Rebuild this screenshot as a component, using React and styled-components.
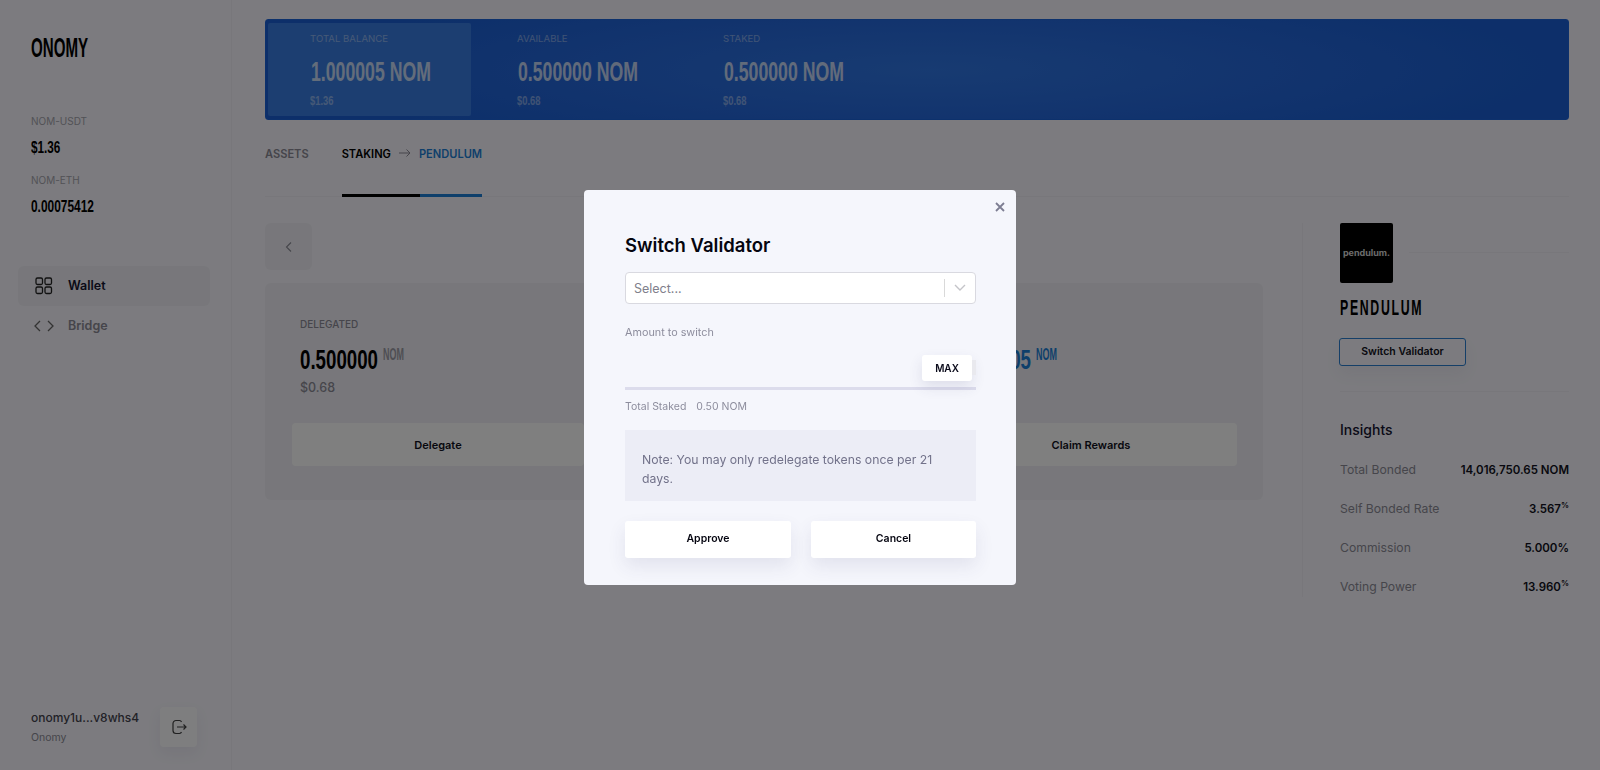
import React from "react";
import styled, { createGlobalStyle } from "styled-components";

const SANS = `"Inter", "Noto Sans", "Liberation Sans", sans-serif`;
const NARROW = `"Liberation Sans", "Arimo", sans-serif`;

const Global = createGlobalStyle`
  html, body { margin: 0; padding: 0; height: 100%; background: #f8f7fe; overflow: hidden; }
  * { box-sizing: border-box; }
  body { font-family: ${SANS}; color: #000; }
`;

/* Tall condensed display type: no such family is installed, so the bold sans is narrowed. */
const Squeezed = styled.span`
  display: block;
  flex: none;
  width: ${(p) => p.$w}px;
  white-space: nowrap;
  font-family: ${NARROW};
  font-weight: 700;
  transform: scaleX(${(p) => p.$x});
  transform-origin: left center;
`;

const Page = styled.div`
  display: grid;
  grid-template-columns: 232px 1fr;
  width: 1600px;
  height: 770px;
`;

const Sidebar = styled.aside`
  display: flex;
  flex-direction: column;
  border-right: 1px solid #f0eff6;
  padding: 33px 0 23px;
`;
const Logo = styled(Squeezed)`
  font-size: 28px;
  line-height: 30px;
  margin-left: 31px;
`;
const PriceBlock = styled.div`
  margin: 51px 0 0 31px;
  display: flex;
  flex-direction: column;
`;
const PriceLabel = styled.div`
  font: 400 10px/14px ${SANS};
  color: #a5a4ad;
  margin-top: ${(p) => p.$top || 0}px;
`;
const PriceValue = styled(Squeezed)`
  font-size: 17px;
  line-height: 20px;
  margin-top: 10px;
`;
const Nav = styled.nav`
  margin: 49px 21px 0 18px;
  display: flex;
  flex-direction: column;
`;
const NavItem = styled.div`
  height: 40px;
  display: flex;
  align-items: center;
  gap: 14px;
  padding-left: 16px;
  border-radius: 6px;
  background: ${(p) => (p.$active ? "#f0eff6" : "transparent")};
  color: ${(p) => (p.$active ? "#151530" : "#8c8b96")};
  font: 600 12.5px/16px ${SANS};
`;
const NavIcon = styled.svg`
  width: 20px;
  height: 20px;
  fill: none;
  stroke: ${(p) => (p.$active ? "#222" : "#666")};
  stroke-width: 1.3;
`;
const Account = styled.div`
  margin-top: auto;
  padding-left: 31px;
  display: flex;
  align-items: center;
`;
const AccountText = styled.div`
  width: 129px;
`;
const Address = styled.div`
  font: 500 12px/16px ${SANS};
  color: #44434e;
`;
const Network = styled.div`
  font: 400 10.5px/14px ${SANS};
  color: #8c8b96;
  margin-top: 5px;
`;
const LogoutButton = styled.div`
  width: 37px;
  height: 40px;
  border-radius: 4px;
  background: #fff;
  opacity: 0.85;
  display: grid;
  place-items: center;
  box-shadow: 0 6px 14px rgba(60, 60, 110, 0.08);
`;

const Main = styled.main`
  padding: 19px 31px 0 33px;
  min-width: 0;
`;
const Banner = styled.section`
  height: 101px;
  border-radius: 3px;
  padding: 3px 4px 3px 2px;
  display: flex;
  background: radial-gradient(ellipse 620px 90px at 51% 50%, #2f76e4 0%, #2568dc 55%, #1a5fd4 100%);
  border: 1px solid #1a62d8;
  color: #fff;
`;
const BalanceCell = styled.div`
  padding: 8px 0 0 ${(p) => p.$pad}px;
  width: ${(p) => p.$w}px;
  border-radius: 2px;
  background: ${(p) => (p.$hl ? "#387ce2" : "transparent")};
`;
const BalanceLabel = styled.div`
  font: 400 9.6px/16px ${SANS};
  opacity: 0.42;
`;
const BalanceValue = styled(Squeezed)`
  font-size: 27px;
  line-height: 28px;
  opacity: 0.72;
  margin: 10.5px 0 0 1px;
`;
const BalanceFiat = styled(Squeezed)`
  font-size: 13px;
  line-height: 14px;
  opacity: 0.42;
  margin-top: 8px;
`;

const Tabs = styled.div`
  height: 77px;
  display: flex;
  gap: 33px;
  border-bottom: 1px solid #f0eff6;
`;
const Tab = styled.div`
  display: flex;
  align-items: flex-start;
  padding-top: 26px;
  font: 600 11.1px/16px ${SANS};
  color: #8c8b96;
`;
const ActiveTab = styled(Tab)`
  color: #000;
  gap: 8px;
  position: relative;
`;
const TabLink = styled.span`
  color: #1d7fd6;
`;
const Underline = styled.div`
  position: absolute;
  left: 0;
  right: 0;
  bottom: -1px;
  height: 3px;
  background: linear-gradient(to right, #000 78px, #1d7fd6 78px);
`;

const Body = styled.div`
  display: grid;
  grid-template-columns: 998px 1fr;
  margin-top: 26px;
`;
const Left = styled.div`
  display: flex;
  flex-direction: column;
  gap: 13px;
`;
const BackButton = styled.div`
  width: 47px;
  height: 47px;
  border-radius: 6px;
  background: #f0eff6;
  display: grid;
  place-items: center;
`;
const Card = styled.div`
  height: 217px;
  border-radius: 6px;
  background: #f0eff6;
  padding: 33px 26px 0 27px;
  display: grid;
  grid-template-columns: repeat(3, 292px);
  column-gap: 34.5px;
`;
const Col = styled.div`
  display: flex;
  flex-direction: column;
`;
const ColLabel = styled.div`
  font: 500 10px/16px ${SANS};
  color: #8c8b96;
  padding-left: 8px;
  height: 16px;
`;
const ColValue = styled.div`
  padding-left: 8px;
  margin-top: 10.5px;
  color: ${(p) => (p.$blue ? "#1d7fd6" : "#000")};
  display: flex;
  align-items: flex-start;
  gap: 5px;
  height: 34px;
`;
const ColNumber = styled(Squeezed)`
  font-size: 28px;
  line-height: 34px;
`;
const Unit = styled(Squeezed)`
  font-size: 16px;
  line-height: 20px;
  margin-top: 2.5px;
  color: ${(p) => (p.$blue ? "#1d7fd6" : "#9d9ca6")};
`;
const ColFiat = styled.div`
  font: 500 12.5px/16px ${SANS};
  color: #8c8b96;
  padding-left: 8px;
  margin-top: 3.5px;
  height: 16px;
`;
const CardButton = styled.div`
  height: 43px;
  margin-top: 27px;
  padding-top: 1px;
  border-radius: 4px;
  background: #fff;
  display: grid;
  place-items: center;
  font: 600 11px/14px ${SANS};
  color: #101020;
`;

const Side = styled.aside`
  border-left: 1px solid #f0eff6;
  height: 374px;
  margin-left: 39px;
  padding-left: 37px;
`;
const SideHead = styled.div`
  display: flex;
  align-items: center;
  gap: 16px;
`;
const Thumb = styled.div`
  width: 53px;
  height: 60px;
  border-radius: 2px;
  background: #000;
  color: #d8d8d8;
  display: grid;
  place-items: center;
  font: 700 9px/10px ${SANS};
`;
const HeadLine = styled.div`
  flex: 1;
  height: 1px;
  margin-top: -2px;
  background: #f0eff6;
`;
const SideName = styled(Squeezed)`
  font-size: 22px;
  line-height: 24px;
  letter-spacing: 3px;
  margin-top: 13px;
`;
const OutlineButton = styled.div`
  width: 127px;
  height: 28px;
  margin: 18px 0 0 -1px;
  border: 1px solid #2a7fd0;
  border-radius: 3px;
  display: grid;
  place-items: center;
  font: 600 10.5px/14px ${SANS};
  color: #101020;
  box-shadow: 0 8px 16px rgba(60, 60, 110, 0.06);
`;
const SideDivider = styled.div`
  height: 1px;
  background: #f0eff6;
  margin-top: 25px;
`;
const InsightTitle = styled.div`
  font: 500 14px/20px ${SANS};
  color: #151530;
  margin-top: 28px;
`;
const InsightRows = styled.div`
  display: flex;
  flex-direction: column;
  margin-top: 20px;
  gap: 19px;
`;
const InsightRow = styled.div`
  display: flex;
  justify-content: space-between;
  align-items: center;
  height: 20px;
  font: 400 12.2px/20px ${SANS};
  color: #8c8b96;
`;
const InsightValue = styled.b`
  font: 600 11.5px/20px ${SANS};
  color: #101020;
  sup { font-size: 8px; line-height: 0; }
`;

const Overlay = styled.div`
  position: fixed;
  inset: 0;
  background: rgba(0, 0, 0, 0.5);
  display: flex;
  align-items: center;
  justify-content: center;
  padding-top: 4px;
`;
const Modal = styled.div`
  position: relative;
  width: 432px;
  height: 395px;
  border-radius: 4px;
  background: #f5f6fc;
  padding: 41px 40px 0 41px;
  display: flex;
  flex-direction: column;
`;
const Close = styled.svg`
  position: absolute;
  top: 11px;
  right: 10px;
  width: 12px;
  height: 12px;
  stroke: #7d7d92;
  stroke-width: 1.8;
  fill: none;
`;
const ModalTitle = styled.h2`
  margin: 0;
  font: 600 18.5px/28px ${SANS};
  color: #05050f;
`;
const SelectBox = styled.div`
  height: 32px;
  margin-top: 13px;
  border: 1px solid #d9d9e0;
  border-radius: 4px;
  background: #fff;
  display: flex;
  align-items: center;
  padding-left: 8px;
  font: 400 12.5px/16px ${SANS};
  color: #80808c;
`;
const SelectText = styled.span`
  flex: 1;
  padding-top: 2px;
`;
const SelectSep = styled.span`
  width: 1px;
  height: 18px;
  background: #d9d9d9;
`;
const SelectChevron = styled.svg`
  width: 30px;
  height: 14px;
  fill: none;
  stroke: #c4c4c9;
  stroke-width: 1.4;
`;
const FieldLabel = styled.div`
  font: 400 10.8px/14px ${SANS};
  color: #8d8d9d;
  margin-top: 22px;
`;
const InputRow = styled.div`
  height: 42px;
  margin-top: 8px;
  border-bottom: 3px solid #dcdcec;
  display: flex;
  justify-content: flex-end;
  align-items: flex-start;
`;
const MaxButton = styled.div`
  width: 50px;
  height: 26px;
  margin-top: 7px;
  border-radius: 3px;
  background: #fff;
  display: grid;
  place-items: center;
  font: 600 10px/14px ${SANS};
  color: #0a0a1a;
  box-shadow: 0 6px 14px rgba(60, 60, 110, 0.12);
`;
const MaxEdge = styled.div`
  width: 4px;
  height: 15px;
  margin-top: 12px;
  background: #e9e9ee;
`;
const StakedRow = styled.div`
  display: flex;
  gap: 10px;
  font: 400 10.5px/14px ${SANS};
  color: #8d8d9d;
  margin-top: 10px;
`;
const Note = styled.div`
  height: 71px;
  margin-top: 16px;
  padding: 20px 30px 0 17px;
  background: #ecedf6;
  font: 400 12.25px/19px ${SANS};
  color: #72728a;
`;
const ModalButtons = styled.div`
  display: grid;
  grid-template-columns: 166px 165px;
  gap: 20px;
  margin-top: 20px;
`;
const ModalButton = styled.div`
  height: 37px;
  border-radius: 3px;
  background: #fff;
  display: grid;
  place-items: center;
  font: 600 10.5px/14px ${SANS};
  color: #050510;
  box-shadow: 0 8px 18px rgba(60, 60, 110, 0.1);
`;

const columns = [
  { id: "delegated", label: "DELEGATED", value: "0.500000", fiat: "$0.68", action: "Delegate" },
  { id: "hidden" },
  { id: "rewards", value: "0.000005", blue: true, action: "Claim Rewards" },
];
const insights = [
  ["Total Bonded", "14,016,750.65 NOM"],
  ["Self Bonded Rate", "3.567", true],
  ["Commission", "5.000%"],
  ["Voting Power", "13.960", true],
];
const balances = [
  { label: "TOTAL BALANCE", value: "1.000005 NOM", fiat: "$1.36", w: 203, pad: 42, hl: true },
  { label: "AVAILABLE", value: "0.500000 NOM", fiat: "$0.68", w: 252, pad: 46 },
  { label: "STAKED", value: "0.500000 NOM", fiat: "$0.68", w: 300, pad: 0 },
];

export default function App() {
  return (
    <>
      <Global />
      <Page>
        <Sidebar>
          <Logo $w={57} $x={0.54}>ONOMY</Logo>
          <PriceBlock>
            <PriceLabel>NOM-USDT</PriceLabel>
            <PriceValue $w={29} $x={0.69}>$1.36</PriceValue>
            <PriceLabel $top={15}>NOM-ETH</PriceLabel>
            <PriceValue $w={63} $x={0.7}>0.00075412</PriceValue>
          </PriceBlock>
          <Nav>
            <NavItem $active>
              <NavIcon $active viewBox="0 0 20 20">
                <rect x="2" y="2" width="6.5" height="6.5" rx="1.5" />
                <rect x="11" y="2" width="6.5" height="6.5" rx="1.5" />
                <rect x="2" y="11" width="6.5" height="6.5" rx="1.5" />
                <rect x="11" y="11" width="6.5" height="6.5" rx="1.5" />
              </NavIcon>
              Wallet
            </NavItem>
            <NavItem>
              <NavIcon viewBox="0 0 20 20">
                <path d="M6 5 L1 10 L6 15" />
                <path d="M14 5 L19 10 L14 15" />
              </NavIcon>
              Bridge
            </NavItem>
          </Nav>
          <Account>
            <AccountText>
              <Address>onomy1u...v8whs4</Address>
              <Network>Onomy</Network>
            </AccountText>
            <LogoutButton>
              <svg width="16" height="16" viewBox="0 0 16 16" fill="none" stroke="#222" strokeWidth="1.2">
                <path d="M10.5 3 A2.5 2.5 0 0 0 8.5 1.5 H5 A3 3 0 0 0 2 4.5 V11.5 A3 3 0 0 0 5 14.5 H8.5 A2.5 2.5 0 0 0 10.5 13" />
                <path d="M6 8 H15 M12.5 5.5 L15 8 L12.5 10.5" />
              </svg>
            </LogoutButton>
          </Account>
        </Sidebar>
        <Main>
          <Banner>
            {balances.map((b) => (
              <BalanceCell key={b.label} $w={b.w} $pad={b.pad} $hl={b.hl}>
                <BalanceLabel>{b.label}</BalanceLabel>
                <BalanceValue $w={118} $x={0.655}>{b.value}</BalanceValue>
                <BalanceFiat $w={24} $x={0.72}>{b.fiat}</BalanceFiat>
              </BalanceCell>
            ))}
          </Banner>
          <Tabs>
            <Tab>ASSETS</Tab>
            <ActiveTab>
              STAKING
              <svg width="12" height="10" viewBox="0 0 12 10" fill="none" stroke="#8c8b96" strokeWidth="1" style={{ marginTop: 2 }}>
                <path d="M0 5 H11 M7.5 1.5 L11 5 L7.5 8.5" />
              </svg>
              <TabLink>PENDULUM</TabLink>
              <Underline />
            </ActiveTab>
          </Tabs>
          <Body>
            <Left>
              <BackButton>
                <svg width="12" height="12" viewBox="0 0 12 12" fill="none" stroke="#8c8b96" strokeWidth="1.1">
                  <path d="M8 1.5 L3.5 6 L8 10.5" />
                </svg>
              </BackButton>
              <Card>
                {columns.map((c) => (
                  <Col key={c.id}>
                    <ColLabel>{c.label}</ColLabel>
                    <ColValue $blue={c.blue}>
                      {c.value && <ColNumber $w={78} $x={0.668}>{c.value}</ColNumber>}
                      {c.value && <Unit $w={21} $x={0.56} $blue={c.blue}>NOM</Unit>}
                    </ColValue>
                    <ColFiat>{c.fiat}</ColFiat>
                    <CardButton>{c.action}</CardButton>
                  </Col>
                ))}
              </Card>
            </Left>
            <Side>
              <SideHead>
                <Thumb>pendulum.</Thumb>
                <HeadLine />
              </SideHead>
              <SideName $w={83} $x={0.56}>PENDULUM</SideName>
              <OutlineButton>Switch Validator</OutlineButton>
              <SideDivider />
              <InsightTitle>Insights</InsightTitle>
              <InsightRows>
                {insights.map(([k, v, pct]) => (
                  <InsightRow key={k}>
                    {k}
                    <InsightValue>
                      {v}
                      {pct && <sup>%</sup>}
                    </InsightValue>
                  </InsightRow>
                ))}
              </InsightRows>
            </Side>
          </Body>
        </Main>
      </Page>
      <Overlay>
        <Modal>
          <Close viewBox="0 0 12 12">
            <path d="M2 2 L10 10 M10 2 L2 10" />
          </Close>
          <ModalTitle>Switch Validator</ModalTitle>
          <SelectBox>
            <SelectText>Select...</SelectText>
            <SelectSep />
            <SelectChevron viewBox="0 0 30 14">
              <path d="M10 4 L15 9 L20 4" />
            </SelectChevron>
          </SelectBox>
          <FieldLabel>Amount to switch</FieldLabel>
          <InputRow>
            <MaxButton>MAX</MaxButton>
            <MaxEdge />
          </InputRow>
          <StakedRow>
            <span>Total Staked</span>
            <span>0.50 NOM</span>
          </StakedRow>
          <Note>Note: You may only redelegate tokens once per 21 days.</Note>
          <ModalButtons>
            <ModalButton>Approve</ModalButton>
            <ModalButton>Cancel</ModalButton>
          </ModalButtons>
        </Modal>
      </Overlay>
    </>
  );
}
